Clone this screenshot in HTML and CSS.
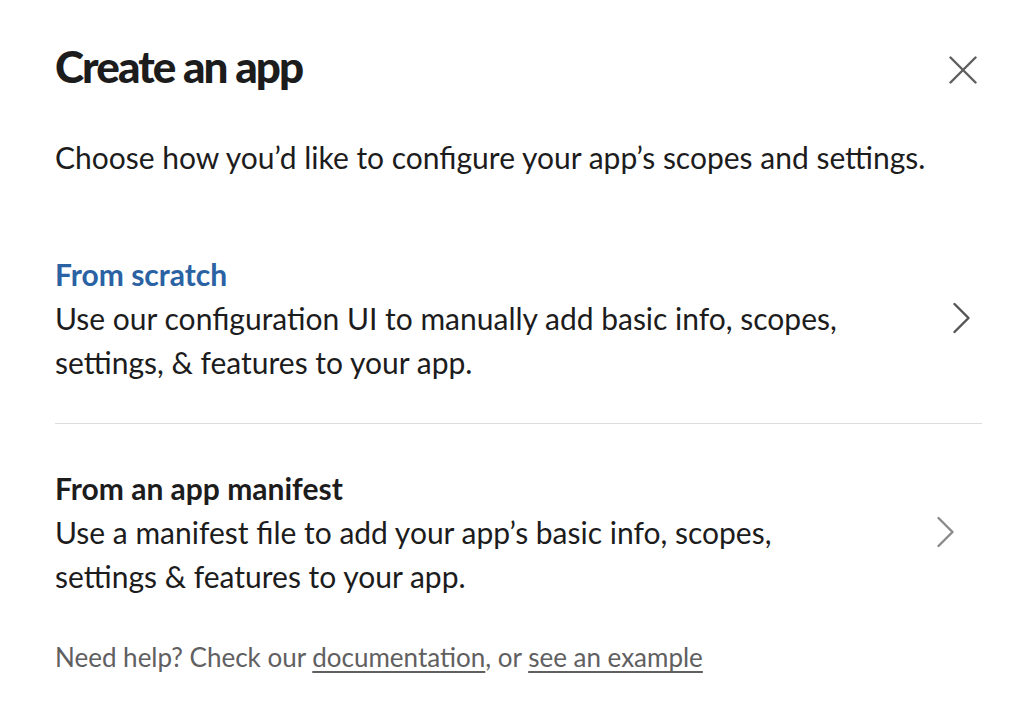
FILE: index.html
```html
<!DOCTYPE html>
<html>
<head>
<meta charset="utf-8">
<link rel="stylesheet" href="styles.css">
</head>
<body>
<div class="modal">
  <div class="header">
    <h1 class="title">Create an app</h1>
    <button class="close" aria-label="Close">
      <svg width="28" height="28" viewBox="0 0 28 28"><path d="M1.5 1.5 L26.5 26.5 M26.5 1.5 L1.5 26.5" stroke="#5e5e5e" stroke-width="2.4" stroke-linecap="round" fill="none"/></svg>
    </button>
  </div>
  <p class="intro">Choose how you’d like to configure your app’s scopes and settings.</p>
  <div class="option first">
    <div class="option-text">
      <div class="option-title blue">From scratch</div>
      <div class="option-desc">Use our configuration UI to manually add basic info, scopes, settings, &amp; features to your app.</div>
    </div>
    <svg class="chev chev-dark" width="18" height="32" viewBox="0 0 18 32"><path d="M1.5 2 L15.5 16 L1.5 30" stroke="#555555" stroke-width="2.4" stroke-linecap="round" stroke-linejoin="round" fill="none"/></svg>
  </div>
  <div class="divider"></div>
  <div class="option second">
    <div class="option-text">
      <div class="option-title">From an app manifest</div>
      <div class="option-desc">Use a manifest file to add your app’s basic info, scopes, settings &amp; features to your app.</div>
    </div>
    <svg class="chev chev-light" width="18" height="32" viewBox="0 0 18 32"><path d="M1.5 2 L15.5 16 L1.5 30" stroke="#8a8a8a" stroke-width="2.4" stroke-linecap="round" stroke-linejoin="round" fill="none"/></svg>
  </div>
  <p class="help">Need help? Check our <a href="#">documentation</a>, or <a href="#">see an example</a></p>
</div>
</body>
</html>
```

FILE: styles.css
```css
html, body {
  margin: 0;
  padding: 0;
  background: #ffffff;
}
body {
  font-family: Lato, "Noto Sans", sans-serif;
  color: #1d1c1d;
}
.modal {
  padding: 40px 52px 0 55px;
}
.header {
  display: flex;
  align-items: center;
  justify-content: space-between;
  height: 52px;
}
.title {
  margin: 0;
  font-size: 44px;
  line-height: 52px;
  font-weight: 900;
  letter-spacing: -1.9px;
  color: #1d1c1d;
}
.close {
  border: 0;
  background: none;
  padding: 0;
  margin-right: 5px;
  margin-top: 8px;
  width: 28px;
  height: 28px;
  display: flex;
}
.intro {
  margin: 43px 0 0 0;
  font-size: 30px;
  line-height: 44px;
}
.option {
  display: flex;
  align-items: center;
}
.option.first {
  margin-top: 73px;
  padding-bottom: 39px;
}
.option.second {
  padding-top: 42px;
}
.option-text {
  flex: 1;
  max-width: 800px;
  font-size: 30px;
  line-height: 44px;
}
.option-title {
  font-weight: 700;
}
.option-title.blue {
  color: #2a62a3;
}
.chev {
  margin-left: auto;
}
.chev-dark {
  margin-right: 11px;
}
.chev-light {
  margin-right: 27px;
}
.divider {
  height: 1px;
  background: #dddddd;
}
.help {
  margin: 41px 0 0 0;
  font-size: 26px;
  line-height: 36px;
  color: #616061;
}
.help a {
  color: #616061;
  text-decoration: underline;
  text-underline-offset: 4px;
}
```
